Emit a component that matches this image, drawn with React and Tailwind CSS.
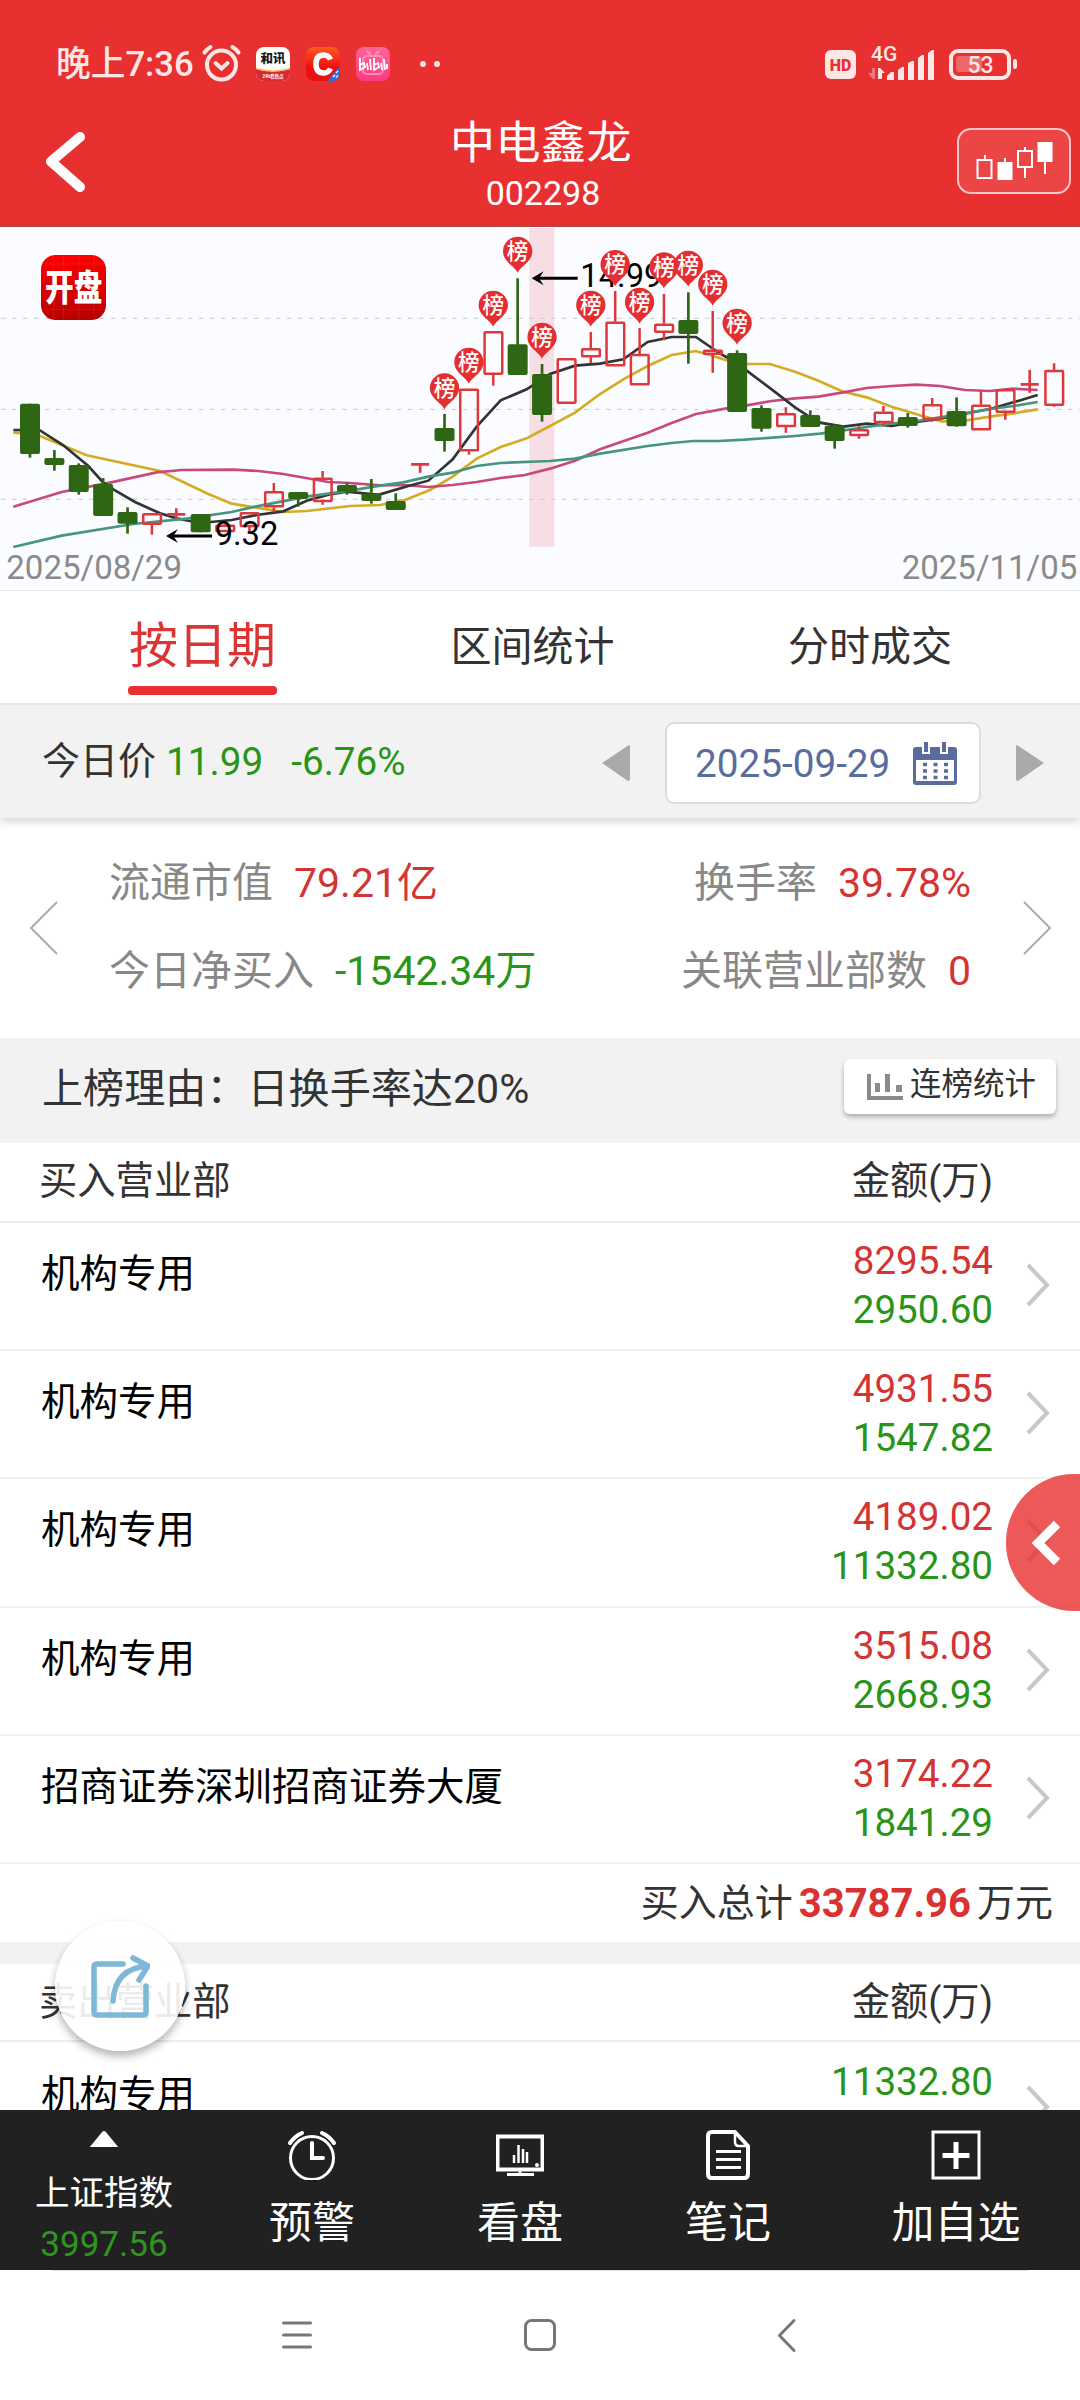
import React from "react";

/* ---------- data ---------- */

// [kind, high, top, bottom, low, pinTop]
const CANDLES = [
  ["down", 551, 551, 702, 713],
  ["down", 690, 714, 735, 752],
  ["down", 730, 735, 816, 824],
  ["down", 774, 792, 888, 888],
  ["down", 862, 876, 911, 941],
  ["up", 880, 880, 914, 944],
  ["cross", 865, 883, 883, 896],
  ["down", 882, 882, 937, 937],
  ["up", 911, 914, 936, 936],
  ["up", 877, 877, 921, 935],
  ["up", 789, 814, 862, 877],
  ["down", 816, 816, 837, 860],
  ["up", 753, 773, 846, 854],
  ["down", 788, 795, 815, 824],
  ["down", 777, 821, 843, 851],
  ["down", 820, 843, 870, 870],
  ["cross", 731, 733, 733, 758],
  ["down", 582, 624, 663, 695, 461],
  ["up", 506, 506, 694, 704, 384],
  ["up", 334, 334, 464, 497, 213],
  ["down", 175, 373, 465, 465, 51],
  ["down", 432, 462, 585, 605, 309],
  ["up", 415, 415, 551, 551],
  ["up", 336, 385, 412, 430, 213],
  ["up", 213, 305, 439, 439, 91],
  ["up", 324, 402, 496, 496, 204],
  ["up", 222, 311, 338, 361, 98],
  ["down", 217, 300, 342, 431, 93],
  ["up", 273, 389, 404, 458, 150],
  ["down", 391, 399, 576, 576, 267],
  ["down", 556, 564, 626, 635],
  ["up", 562, 580, 621, 638],
  ["down", 571, 585, 621, 621],
  ["down", 613, 617, 663, 686],
  ["up", 619, 628, 648, 656],
  ["up", 558, 575, 609, 618],
  ["down", 579, 591, 618, 623],
  ["up", 534, 553, 600, 605],
  ["down", 532, 573, 619, 620],
  ["up", 513, 554, 631, 631],
  ["up", 506, 508, 578, 599],
  ["cross", 450, 493, 493, 518],
  ["up", 430, 450, 557, 560],
];

const LINES = [
  {
    color: "#d4ab22",
    points:
      "40,638 90,640 120,648 260,706 480,753 625,822 695,851 770,863 850,876 920,873 1050,858 1140,855 1215,840 1290,810 1358,770 1430,716 1502,681 1580,655 1650,618 1725,578 1800,522 1870,478 1943,438 2015,405 2088,393 2182,421 2240,432 2310,432 2385,455 2455,482 2530,515 2600,532 2675,560 2760,586 2825,604 2895,602 2970,590 3040,580 3113,568",
  },
  {
    color: "#c9487f",
    points:
      "40,860 185,816 330,788 470,757 545,750 700,749 775,753 850,762 985,786 1050,789 1140,796 1210,795 1285,801 1358,795 1430,786 1502,774 1575,765 1650,746 1725,722 1800,688 1943,638 2015,609 2088,582 2180,565 2240,556 2315,543 2385,535 2455,530 2530,517 2600,504 2675,498 2750,494 2820,498 2895,510 2970,513 3040,506 3113,510",
  },
  {
    color: "#333333",
    points:
      "40,630 118,630 190,676 265,738 310,788 340,808 405,846 480,880 530,895 570,903 632,906 695,900 770,885 850,874 920,842 985,824 1040,815 1130,824 1140,823 1225,798 1285,782 1358,718 1430,620 1502,541 1580,508 1650,462 1725,437 1800,431 1870,418 1943,366 2015,351 2088,351 2160,401 2185,414 2240,452 2315,508 2385,562 2425,588 2460,608 2530,620 2600,611 2675,618 2750,606 2820,596 2895,581 2970,567 3040,547 3113,525",
  },
  {
    color: "#46957f",
    points:
      "40,981 185,947 400,912 560,896 695,876 770,859 920,830 1050,812 1140,797 1210,787 1285,770 1358,758 1430,738 1502,729 1650,723 1725,716 1800,701 1943,678 2015,669 2080,663 2155,663 2235,659 2385,648 2460,641 2530,631 2600,621 2675,611 2750,603 2820,592 2895,580 2970,567 3040,558 3113,546",
  },
];

const BUYERS = [
  { name: "机构专用", buy: "8295.54", sell: "2950.60" },
  { name: "机构专用", buy: "4931.55", sell: "1547.82" },
  { name: "机构专用", buy: "4189.02", sell: "11332.80" },
  { name: "机构专用", buy: "3515.08", sell: "2668.93" },
  { name: "招商证券深圳招商证券大厦", buy: "3174.22", sell: "1841.29" },
];

/* ---------- header ---------- */

function StatusBar() {
  return (
    <div className="flex h-[127px] items-center justify-between pl-[56px] pr-[62px] text-[#fde6e6]">
      <div className="flex items-center">
        <span className="w-[144px] whitespace-nowrap pt-px text-[34.7px] font-medium leading-none">晚上7:36</span>
        <svg width="42" height="40" viewBox="0 0 42 40" fill="none" stroke="#fde6e6" strokeWidth="4" strokeLinecap="round">
          <circle cx="21.500" cy="21" r="14.500" />
          <path d="M4.500 8.500Q7 5 10.500 3M38.500 8.500Q36 5 32.500 3M15.500 19l6 5.500 6-5.500" />
        </svg>
        {/* app notification icons */}
        <svg className="ml-[14px]" width="136" height="34" viewBox="0 0 136 34">
          <defs>
            <clipPath id="app1"><rect width="34" height="34" rx="8" /></clipPath>
            <clipPath id="app2"><rect x="50" width="34" height="34" rx="8" /></clipPath>
            <linearGradient id="orange" x2="0" y2="1">
              <stop stopColor="#ff5a1f" />
              <stop offset=".6" stopColor="#ee1010" />
            </linearGradient>
            <linearGradient id="pink" x2="0" y2="1">
              <stop stopColor="#ff6699" />
              <stop offset="1" stopColor="#fb3a82" />
            </linearGradient>
          </defs>
          <g clipPath="url(#app1)">
            <rect width="34" height="34" fill="#fff" />
            <path d="M0 22q17 5 34 0v12H0z" fill="#d82a33" />
            <path d="M0 21.500q17 5 34 0" stroke="#f0c060" strokeWidth="1.500" fill="none" />
            <text x="17" y="16" fontSize="12.500" fontWeight="900" textAnchor="middle" fill="#1b1b1b">和讯</text>
            <text x="17" y="31" fontSize="4.500" fontWeight="700" textAnchor="middle" fill="#fff">24h看热点</text>
          </g>
          <g clipPath="url(#app2)">
            <rect x="50" width="34" height="34" fill="url(#orange)" />
            <path d="M71 34l13-15v15z" fill="#2c6be0" />
            <path d="M74.500 12.500q-2-4.500-7-4.500-7.500 0-7.500 9t7.500 9q5 0 7-4.500" fill="none" stroke="#fff" strokeWidth="5.500" />
            <path d="M77 30l2-2M80 31l2-3M80 26l2-2" stroke="#fff" strokeWidth="1.200" />
          </g>
          <rect x="100" width="34" height="34" rx="8" fill="url(#pink)" />
          <g fill="none" stroke="#ff8fb5" strokeWidth="2">
            <rect x="107" y="9" width="20" height="18" rx="4" />
            <path d="M111 4l4 4M123 4l-4 4" />
          </g>
          <g fill="none" stroke="#fff" strokeWidth="1.800">
            <path d="M104 11v12l5-3-1-4-4 2M111 16l1 7M114 12l1 11M118 11v12l5-3-1-4-4 2M125 16l1 7M128 12l1 11M131 17v5" />
          </g>
        </svg>
        <div className="ml-[28px] flex gap-[8px]">
          <i className="size-[6px] rounded-full bg-[#fde6e6]" />
          <i className="size-[6px] rounded-full bg-[#fde6e6]" />
        </div>
      </div>
      <svg width="193" height="48" viewBox="0 -5 193 48" fill="#fde6e6">
        <rect x="0" y="5" width="31" height="29" rx="6" />
        <text x="15.500" y="25.500" fontSize="16" fontWeight="900" textAnchor="middle" fill="#e83030">HD</text>
        <text x="46" y="15.500" fontSize="21" fontWeight="500">4G</text>
        <path d="M43 28h4v-5h3v11h-2z" opacity=".4" />
        <path d="M53 34V23h2l5 5h-3v6z" />
        <path d="M62 35v-4l4-4h3v8zM73 35V25l4-3h2v13zM83 35V18l4-2h2v19zM93 35V13l4-3h2v25zM103 35V8l4-3h2v30z" />
        <rect x="126" y="6" width="58" height="27" rx="7" fill="none" stroke="#fde6e6" strokeWidth="4" />
        <rect x="131" y="11" width="26" height="16" rx="3" opacity=".3" />
        <rect x="188" y="14" width="4" height="10" rx="2" />
        <text x="155.500" y="28" fontSize="23" fontWeight="500" textAnchor="middle">53</text>
      </svg>
    </div>
  );
}

function TitleBar() {
  return (
    <div className="flex h-[99px] items-start justify-between pl-[44px] pr-[9px] pt-px text-white">
      <svg className="mt-[2px] mr-[37px]" width="44" height="62" viewBox="0 0 44 62" fill="none" stroke="#fff" strokeWidth="10" strokeLinecap="round" strokeLinejoin="round">
        <path d="M36 7L7 31.500 36 57" />
      </svg>
      <div className="-mt-[9px] flex flex-col items-center">
        <h1 className="text-[45px] leading-[50px] tracking-[0.5px]">中电鑫龙</h1>
        <span className="mt-[6px] pl-[4px] text-[34px] leading-[36px]">002298</span>
      </div>
      <div className="flex h-[66px] w-[114px] items-center justify-center rounded-[14px] border-2 border-white/70 bg-[#ec4546]">
        <svg width="78" height="42" viewBox="0 0 78 42" fill="none" stroke="#fff" strokeWidth="2">
          <path d="M10 15v5M2.500 20h14v18h-14z" />
          <path d="M30 18v5M50 7v4M43 11h14v16H43zM50 27v11M70 20v14" />
          <path d="M22.500 22h15v18h-15zM62.500 2h15v20h-15z" fill="#fff" stroke="none" />
        </svg>
      </div>
    </div>
  );
}

/* ---------- k-line chart ---------- */

function Candle({ x, data }) {
  const [kind, high, top, bottom, low] = data;
  if (kind === "down") {
    return (
      <g fill="#2f6614">
        <rect x={x - 4} y={high} width="8" height={low - high} />
        <rect x={x - 30} y={top} width="60" height={bottom - top} rx="6" />
      </g>
    );
  }
  if (kind === "cross") {
    return <path d={`M${x - 27} ${top}h54M${x} ${high}V${low}`} stroke="#dc393c" strokeWidth="8" />;
  }
  return (
    <g stroke="#dc393c" strokeWidth="7.500" fill="none">
      <path d={`M${x} ${high}V${top}M${x} ${bottom}V${low}`} />
      <rect x={x - 26} y={top + 3} width="53" height={bottom - top - 6} rx="2" />
    </g>
  );
}

function Pin({ x, top }) {
  return (
    <g transform={`translate(${x} ${top})`}>
      <path d="M0 107C-8 88-44 74-44 43a44 44 0 1 1 88 0C44 74 8 88 0 107z" fill="#e52e30" />
      <text y="66" fontSize="65" fontWeight="500" textAnchor="middle" fill="#fff">榜</text>
    </g>
  );
}

function PriceMark({ x, y, label }) {
  return (
    <g>
      <path d={`M${x + 14} ${y}h124`} stroke="#000" strokeWidth="9" />
      <path d={`M${x} ${y}l36-21-14 21 14 21z`} fill="#000" />
      <text x={x + 146} y={y + 26} fontSize="98" fill="#000">{label}</text>
    </g>
  );
}

function KLineChart() {
  const cx = (i) => 90 + i * 73.15;
  return (
    <svg className="block border-b border-[#e6e6ea] bg-[#fbfcff]" width="1080" height="364" viewBox="0 21 3240 1089">
      <defs>
        <linearGradient id="logo" x2="0" y2="1">
          <stop stopColor="#ff0000" />
          <stop offset="1" stopColor="#b80000" />
        </linearGradient>
      </defs>
      <rect x="1588" y="24" width="75" height="956" fill="#f6dee4" />
      {[295, 568, 838].map((y) => (
        <path key={y} d={`M3 ${y}h3237`} stroke="#c8c9cd" strokeWidth="3" strokeDasharray="13 20" />
      ))}
      <rect x="123" y="105" width="195" height="195" rx="44" fill="url(#logo)" />
      <path d="M160 105v195M190 105v195M236 105v195M282 105v195M123 132h195M123 268h195" stroke="#fff" strokeOpacity=".08" strokeWidth="3" />
      <text transform="translate(221 243) scale(1 1.25)" fontSize="86" fontWeight="900" textAnchor="middle" fill="#fff">开盘</text>
      {LINES.map((l) => (
        <polyline key={l.color} points={l.points} fill="none" stroke={l.color} strokeWidth="8" />
      ))}
      {CANDLES.map((c, i) => (
        <Candle key={i} x={cx(i)} data={c} />
      ))}
      <PriceMark x={498} y={948} label="9.32" />
      <PriceMark x={1595} y={175} label="14.99" />
      {CANDLES.map((c, i) => c[5] !== undefined && <Pin key={i} x={cx(i)} top={c[5]} />)}
      <g fontSize="99" fill="#8a8a8a">
        <text x="19" y="1077">2025/08/29</text>
        <text x="3232" y="1077" textAnchor="end">2025/11/05</text>
      </g>
    </svg>
  );
}

/* ---------- panels ---------- */

function Tabs() {
  return (
    <div className="flex h-[114px] items-center justify-between border-b-2 border-[#ececec] px-[128px] text-[41px] text-[#333]">
      <div className="flex h-full w-[149px] flex-col items-center pt-[23px]">
        <span className="text-[49px] leading-[66px] text-[#da3434]">按日期</span>
        <span className="mt-[6px] h-[9px] w-full rounded-[4px] bg-[#e82f31]" />
      </div>
      <span className="pt-px">区间统计</span>
      <span className="pt-px">分时成交</span>
    </div>
  );
}

function PriceBar() {
  return (
    <div className="relative flex h-[113px] items-center justify-between bg-[#f2f2f2] pl-[42px] pr-[36px] pt-[3px] text-[38.7px] text-[#2a9418] shadow-[0_4px_8px_rgba(0,0,0,0.16)]">
      <div className="flex items-center pb-[2px]">
        <span className="text-[38px] text-[#333]">今日价</span>
        <span className="ml-[10px]">11.99</span>
        <span className="ml-[28px]">-6.76%</span>
      </div>
      <div className="flex items-center">
        <svg width="28" height="38" viewBox="0 0 28 38" fill="#aaa"><path d="M27 1q1 0 1 2v32q0 2-2 2L0 19z" /></svg>
        <div className="mx-[35px] flex h-[82px] w-[316px] items-center rounded-[9px] border-2 border-[#dcdcdc] bg-white pl-[28px] text-[#5a6c9e]">
          <span className="w-[218px] pt-[2px]">2025-09-29</span>
          <svg width="44" height="43" viewBox="0 0 44 43">
            <path d="M3 5h38q3 0 3 3v32q0 3-3 3H3q-3 0-3-3V8q0-3 3-3z" fill="#5a6c9e" />
            <path d="M3 18h38v21H3zM9 3h8v9H9zM27 3h8v9h-8z" fill="#fff" />
            <path d="M11 0h4v10h-4zM29 0h4v10h-4z" fill="#5a6c9e" />
            <path d="M10 22.500h25M10 29h25M10 35.500h25" stroke="#5a6c9e" strokeWidth="3.500" strokeDasharray="4 6.500" />
          </svg>
        </div>
        <svg width="28" height="38" viewBox="0 0 28 38" fill="#aaa"><path d="M1 1q-1 0-1 2v32q0 2 2 2l26-18z" /></svg>
      </div>
    </div>
  );
}

function Stat({ label, value, color }) {
  return (
    <div className="flex gap-[21px] leading-[88px]">
      <span className="text-[#888]">{label}</span>
      <span className={color}>{value}</span>
    </div>
  );
}

function Stats() {
  return (
    <div className="flex h-[220px] items-center justify-between px-[28px] text-[41px]">
      <svg width="32" height="54" viewBox="0 0 32 54" fill="none" stroke="#aaa" strokeWidth="2"><path d="M29 1L3 27l26 26" /></svg>
      <div className="flex flex-1 justify-between pb-[3px] pl-[49px] pr-[50px]">
        <div>
          <Stat label="流通市值" value="79.21亿" color="text-[#d33434]" />
          <Stat label="今日净买入" value="-1542.34万" color="text-[#2a9418]" />
        </div>
        <div className="flex flex-col items-end">
          <Stat label="换手率" value="39.78%" color="text-[#d33434]" />
          <Stat label="关联营业部数" value="0" color="text-[#d33434]" />
        </div>
      </div>
      <svg className="-mr-px" width="32" height="54" viewBox="0 0 32 54" fill="none" stroke="#aaa" strokeWidth="2"><path d="M3 1l26 26L3 53" /></svg>
    </div>
  );
}

function ReasonBar() {
  return (
    <div className="flex h-[105px] items-center justify-between bg-[#f2f2f2] pl-[42px] pr-[24px] text-[#333]">
      <span className="pb-px text-[41.1px]">上榜理由：日换手率达20%</span>
      <div className="mb-[8px] flex h-[55px] w-[212px] items-center rounded-[6px] bg-white pl-[23px] text-[31.5px] shadow-[0_3px_5px_rgba(0,0,0,0.28)]">
        <svg className="mr-[7px] shrink-0" width="36" height="27" viewBox="0 0 36 27" fill="#8a8a8a">
          <path d="M0 1h4v22h32v4H0zM8 10h5v9H8zM18 1h5v18h-5zM29 12h6v7h-6z" />
        </svg>
        <span className="whitespace-nowrap pb-[3px]">连榜统计</span>
      </div>
    </div>
  );
}

function TableHead({ title, className }) {
  return (
    <div className={`flex items-center justify-between border-b-2 border-[#eee] pl-[39px] pr-[87px] text-[38.3px] text-[#333] ${className}`}>
      <span>{title}</span>
      <span>金额(万)</span>
    </div>
  );
}

function RowChevron({ className }) {
  return (
    <svg className={className} width="26" height="44" viewBox="0 0 26 44" fill="none" stroke="#c8c8c8" strokeWidth="4">
      <path d="M3 2l19 20L3 42" />
    </svg>
  );
}

function BuyerRow({ name, buy, sell }) {
  return (
    <div className="flex h-[128.2px] items-start border-b-2 border-[#f0f0f0] pl-[41px] pr-[29px] text-[38.5px]">
      <span className="flex-1 pt-[26px] leading-[50px] text-black">{name}</span>
      <div className="flex flex-col items-end pt-[13px] text-[38.6px] leading-[49px]">
        <span className="text-[#d33434]">{buy}</span>
        <span className="text-[#2a9418]">{sell}</span>
      </div>
      <RowChevron className="ml-[32px] mt-[40px]" />
    </div>
  );
}

/* ---------- bottom ---------- */

function BottomTab({ label, children }) {
  return (
    <div className="flex w-[208px] flex-col items-center pt-[19px]">
      <div className="flex h-[52px] items-center">{children}</div>
      <span className="mt-[12px] text-[43px] leading-[60px]">{label}</span>
    </div>
  );
}

function BottomBar() {
  return (
    <div className="flex h-[160px] shrink-0 bg-[#212121] text-white">
      <div className="flex w-[208px] flex-col items-center">
        <svg className="mt-[20px]" width="30" height="18" viewBox="0 0 30 18" fill="#fff"><path d="M0 18L13 2q2-2 4 0l13 16z" /></svg>
        <span className="mt-[21px] text-[34.5px] leading-[50px]">上证指数</span>
        <span className="mt-[2px] text-[35px] leading-[50px] text-[#2f9420]">3997.56</span>
      </div>
      <BottomTab label="预警">
        <svg width="50" height="50" viewBox="0 0 50 50" fill="none" stroke="#fff" strokeWidth="3" strokeLinecap="round">
          <circle cx="25" cy="28" r="21.500" />
          <path d="M25 13v15h11" strokeWidth="4" />
          <path d="M3 13Q8 6 15 3M47 13Q42 6 35 3" strokeWidth="4" />
        </svg>
      </BottomTab>
      <BottomTab label="看盘">
        <svg width="48" height="42" viewBox="0 0 48 42" fill="none" stroke="#fff" strokeWidth="3">
          <rect x="1.500" y="2.500" width="45" height="33" strokeWidth="4" />
          <path d="M11 40.500h27M24 36v5" />
          <path d="M18 21v8M22.500 11v18M27 15v14M31 18v11" strokeWidth="2.500" />
          <circle cx="41" cy="31" r="2" fill="#fff" stroke="none" />
        </svg>
      </BottomTab>
      <BottomTab label="笔记">
        <svg width="44" height="50" viewBox="0 0 44 50" fill="none" stroke="#fff" strokeWidth="4" strokeLinejoin="round">
          <path d="M6 2h23l13 14v28q0 4-4 4H6q-4 0-4-4V6q0-4 4-4z" />
          <path d="M29 3v9q0 4 4 4h8" strokeWidth="2.500" />
          <path d="M10 21.500h25M10 29.500h25M10 37.500h25" strokeWidth="3" />
        </svg>
      </BottomTab>
      <div className="flex flex-1 justify-center">
        <BottomTab label="加自选">
          <svg width="50" height="50" viewBox="0 0 50 50" fill="none" stroke="#fff" strokeWidth="3">
            <rect x="2" y="2" width="46" height="46" />
            <path d="M11.500 25.500h27M25 12v27" strokeWidth="5" />
          </svg>
        </BottomTab>
      </div>
    </div>
  );
}

function SystemNav() {
  return (
    <div className="relative h-[130px] shrink-0 px-[52px]">
      <div className="h-px bg-[#ddd]" />
      <svg className="block" width="976" height="129" viewBox="52 0 976 129" fill="none" stroke="#777" strokeWidth="3" strokeLinecap="round" strokeLinejoin="round">
        <path d="M283.500 52h27M283.500 64h27M283.500 76h27" />
        <rect x="525.500" y="49.500" width="29" height="29" rx="6" />
        <path d="M794 49.500L779.500 64.500l14.500 15" />
      </svg>
    </div>
  );
}

export default function App() {
  return (
    <div
      lang="zh-CN"
      className="relative flex h-[2400px] w-[1080px] flex-col overflow-hidden bg-white font-['Roboto','Noto_Sans_CJK_SC',sans-serif]"
    >
      <header className="h-[227px] shrink-0 border-b border-[#a34a4a] bg-[#e83030]">
        <StatusBar />
        <TitleBar />
      </header>

      <main className="h-[1883px] shrink-0 overflow-hidden">
        <KLineChart />
        <Tabs />
        <PriceBar />
        <Stats />
        <ReasonBar />
        <TableHead title="买入营业部" className="h-[80px] pb-[2px]" />
        {BUYERS.map((b, i) => (
          <BuyerRow key={i} {...b} />
        ))}
        <div className="flex h-[78px] items-center justify-end pr-[27px] pt-[2px] text-[38px] text-[#333]">
          <span>买入总计</span>
          <span className="mx-[6px] text-[40px] font-bold text-[#d93232]">33787.96</span>
          <span>万元</span>
        </div>
        <div className="h-[22px] bg-[#f2f2f2]" />
        <TableHead title="卖出营业部" className="h-[78px] pb-px" />
        <div className="flex items-start pl-[41px] pr-[29px] text-[38.5px]">
          <span className="flex-1 pt-[28px] leading-[50px] text-black">机构专用</span>
          <span className="pt-[15px] text-[38.6px] leading-[49px] text-[#2a9418]">11332.80</span>
          <RowChevron className="ml-[32px] mt-[43px]" />
        </div>
      </main>

      <BottomBar />
      <SystemNav />

      {/* share button */}
      <div className="absolute left-[55px] top-[1921px] flex size-[130px] items-center justify-center rounded-full bg-white/90 shadow-[0_5px_9px_rgba(0,0,0,0.3)]">
        <svg width="60" height="64" viewBox="0 0 60 64" fill="none" stroke="#7db8d6" strokeWidth="5.500" strokeLinecap="round" strokeLinejoin="round">
          <path d="M33 10H7q-3 0-3 3v45q0 3 3 3h46q3 0 3-3V32" />
          <path d="M23 47Q25 14 58 12M43 4l15 8-9 14" />
        </svg>
      </div>

      {/* side drawer handle */}
      <div className="absolute left-[1006px] top-[1474px] flex h-[137px] w-[74px] items-center rounded-l-[68px] bg-[#e83030]/80 pl-[25px]">
        <svg width="32" height="48" viewBox="0 0 32 48" fill="none" stroke="#fff" strokeWidth="9"><path d="M26 5L7 24l19 19" /></svg>
      </div>
    </div>
  );
}
